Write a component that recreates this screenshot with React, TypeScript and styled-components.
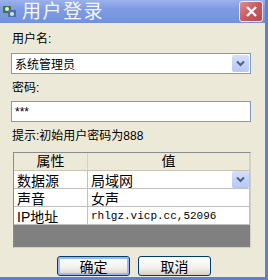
import React from 'react';
import styled, {createGlobalStyle} from 'styled-components';

const GlobalStyle = createGlobalStyle`
  html, body {
    margin: 0;
    padding: 0;
    background: #ECE9D8;
  }
  * {
    box-sizing: border-box;
  }
`
const cn = `"Liberation Sans", "Noto Sans CJK SC", sans-serif`

const Window = styled.div`
  width: 268px;
  height: 280px;
  display: flex;
  flex-direction: column;
  background: #ECE9D8;
  border-right: 3px solid #5C7FD8;
  border-bottom: 3px solid #5C7FD8;
  font-family: ${cn};
  font-size: 12px;
  color: #000;
  overflow: hidden;
`
const TitleBar = styled.div`
  height: 23px;
  flex: none;
  display: flex;
  align-items: center;
  padding: 0 2px 0 2px;
  background: linear-gradient(#9BB2EC, #7F9BE2 40%, #7291DD);
`
const TitleIcon = styled.svg`
  width: 15px;
  height: 15px;
  flex: none;
`
const Title = styled.span`
  margin-left: 5px;
  color: #F4F6FF;
  font-size: 19px;
  letter-spacing: 1.5px;
  flex: 1;
  line-height: 23px;
`
const CloseButton = styled.div`
  width: 24px;
  height: 21px;
  border: 1px solid #F0E8EC;
  border-radius: 3px;
  background: linear-gradient(135deg, #DC9090, #C75A5E 50%, #B84A50);
  display: flex;
  align-items: center;
  justify-content: center;
`
const Body = styled.div`
  flex: 1;
  display: flex;
  flex-direction: column;
  padding: 10px 14px 0 11px;
`
const Label = styled.div<{gap?: number}>`
  height: 13px;
  line-height: 13px;
  margin-left: 1px;
  margin-top: ${p => p.gap ?? 0}px;
`
const Field = styled.div<{gap?: number}>`
  height: 21px;
  margin-top: ${p => p.gap ?? 0}px;
  border: 1px solid #7F9DB9;
  background: #fff;
  display: flex;
  align-items: center;
  padding-left: 3px;
  padding-right: 1px;
`
const FieldText = styled.span`
  flex: 1;
  font-size: 12px;
`
const DropButton = styled.div`
  width: 17px;
  height: 17px;
  border-radius: 2px;
  background: linear-gradient(#D4E0FB, #B5C8F4);
  display: flex;
  align-items: center;
  justify-content: center;
`
const Grid = styled.div`
  margin-top: 9px;
  margin-left: 2px;
  height: 96px;
  border: 1px solid #8C8C8C;
  border-right-color: #D4D0C8;
  border-bottom-color: #D4D0C8;
  background: #808080;
  display: grid;
  grid-template-columns: 74px 1fr;
  grid-auto-rows: 18px;
  align-content: start;
`
const HeadCell = styled.div`
  height: 18px;
  background: #ECE9D8;
  border-right: 1px solid #D4D0C8;
  border-bottom: 1px solid #C8C4B4;
  text-align: center;
  font-size: 14px;
  line-height: 17px;
`
const Cell = styled.div<{mono?: boolean}>`
  background: #fff;
  border-right: 1px solid #C0C0C0;
  border-bottom: 1px solid #C0C0C0;
  display: flex;
  align-items: center;
  padding-left: 3px;
  font-size: ${p => p.mono ? '11px' : '14px'};
  font-family: ${p => p.mono ? `"Liberation Mono", "Noto Sans CJK SC", monospace` : cn};
`
const CellText = styled.span`
  flex: 1;
`
const Buttons = styled.div`
  margin-top: 8px;
  display: flex;
  justify-content: center;
  gap: 8px;
  padding-left: 6px;
`
const Button = styled.div<{primary?: boolean}>`
  width: 73px;
  height: 20px;
  border: 1px solid #003C74;
  border-radius: 3px;
  background: linear-gradient(#FFFFFF, #F2F1EC 60%, #D6D0C5);
  box-shadow: ${p => p.primary ? 'inset 0 0 0 2px #9CB8F0' : 'none'};
  display: flex;
  align-items: center;
  justify-content: center;
  font-size: 14px;
`

const Chevron = () => (
  <svg width="9" height="7" viewBox="0 0 9 7">
    <path d="M1 1.5 L4.5 5 L8 1.5" stroke="#4D6185" strokeWidth="2" fill="none"/>
  </svg>
)

const rows = [
  {name: '数据源', value: '局域网', drop: true},
  {name: '声音', value: '女声'},
  {name: 'IP地址', value: 'rhlgz.vicp.cc,52096', mono: true},
]

const App = () => (
  <>
    <GlobalStyle/>
    <Window>
      <TitleBar>
        <TitleIcon viewBox="0 0 15 15">
          <rect x="1" y="2" width="8" height="7" fill="#3E7A3A"/>
          <rect x="6" y="6" width="8" height="7" fill="#4C6FB8"/>
          <circle cx="5" cy="5" r="2" fill="#E8E8E8"/>
          <circle cx="10" cy="10" r="2" fill="#DDE6C0"/>
        </TitleIcon>
        <Title>用户登录</Title>
        <CloseButton>
          <svg width="13" height="13" viewBox="0 0 13 13">
            <path d="M2 2 L11 11 M11 2 L2 11" stroke="#fff" strokeWidth="2.4"/>
          </svg>
        </CloseButton>
      </TitleBar>
      <Body>
        <Label>用户名:</Label>
        <Field gap={7}>
          <FieldText>系统管理员</FieldText>
          <DropButton><Chevron/></DropButton>
        </Field>
        <Label gap={8}>密码:</Label>
        <Field gap={6}>
          <FieldText>***</FieldText>
        </Field>
        <Label gap={8}>提示:初始用户密码为888</Label>
        <Grid>
          <HeadCell>属性</HeadCell>
          <HeadCell>值</HeadCell>
          {rows.map(r => (
            <React.Fragment key={r.name}>
              <Cell>{r.name}</Cell>
              <Cell mono={r.mono}>
                <CellText>{r.value}</CellText>
                {r.drop && <DropButton><Chevron/></DropButton>}
              </Cell>
            </React.Fragment>
          ))}
        </Grid>
        <Buttons>
          <Button primary>确定</Button>
          <Button>取消</Button>
        </Buttons>
      </Body>
    </Window>
  </>
);

export default App;
